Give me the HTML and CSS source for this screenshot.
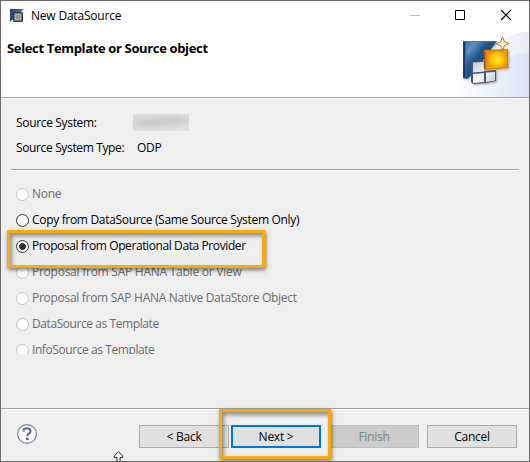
FILE: index.html
```html
<!DOCTYPE html>
<html lang="en">
<head>
<meta charset="utf-8">
<title>New DataSource</title>
<link rel="stylesheet" href="styles.css">
</head>
<body>
<div class="window">
  <header class="titlebar">
    <svg class="app-icon" width="14" height="14" viewBox="0 0 14 14">
      <defs><linearGradient id="ab" x2="1"><stop stop-color="#1c477d"/><stop offset="1" stop-color="#397cb5"/></linearGradient></defs>
      <path d="M0 0h14L0 13z" fill="url(#ab)"/>
      <path d="M3.5 3.5h9v9h-9z" fill="#777" stroke="#3f3f3f"/>
      <path d="M5.5 5.5h5v5h-5z" fill="#939393" stroke="#b5b5b5"/>
    </svg>
    <span class="title">New DataSource</span>
    <svg class="controls" width="101" height="12" viewBox="0 0 101 12" fill="none">
      <path d="M0 6.5h10" stroke="#bfbfbf"/>
      <path d="M45.5 1.5h9v9h-9z" stroke="#000"/>
      <path d="M91 1l10 10M101 1L91 11" stroke="#000" stroke-width="1.1"/>
    </svg>
  </header>
  <section class="banner">
    <h1>Select Template or Source object</h1>
    <svg class="banner-art" width="74" height="67" viewBox="455 30 74 67">
      <defs>
        <linearGradient id="sky"><stop stop-color="#fff"/><stop offset="1" stop-color="#d8e1f5"/></linearGradient>
        <linearGradient id="blue" x2="1" y2="1"><stop stop-color="#2a639c"/><stop offset=".2" stop-color="#5c93c3"/><stop offset=".4" stop-color="#245486"/><stop offset="1" stop-color="#163b70"/></linearGradient>
        <radialGradient id="gold"><stop stop-color="#ffed24"/><stop offset=".55" stop-color="#ffc80b"/><stop offset="1" stop-color="#ef9700"/></radialGradient>
        <linearGradient id="glass" x2="1" y2="1"><stop stop-color="#bccbdd"/><stop offset=".5" stop-color="#f2f6fb"/><stop offset="1" stop-color="#c3ceda"/></linearGradient>
        <filter id="soft" x="-20%" y="-20%" width="150%" height="150%"><feDropShadow dx="1" dy="1" stdDeviation=".8" flood-opacity=".35"/></filter>
      </defs>
      <path d="M455 97Q480 38 529 31V97z" fill="url(#sky)" opacity=".6"/>
      <path d="M455 97Q494 56 529 52V97z" fill="url(#sky)" opacity=".8"/>
      <g filter="url(#soft)">
        <path d="M463 41h34l-9 12-14 20-7 6-4-1z" fill="url(#blue)"/>
        <path d="M464.3 42v36" stroke="#12396c" stroke-width="2.2"/>
        <path d="M466 43v34M464 41.500h32" stroke="#477dac" stroke-width=".8"/>
        <path d="M471 62l13-1v10l12-1v11l-10 2-13 1-2-2v-10z" fill="#4b5969"/>
        <path d="M473 62.500l11-.500v9.500l-11 1zM473 74l11-1v9l-11 1zM486 72.500l9-.500v8.500l-9 1.500z" fill="url(#glass)"/>
        <path d="M484 50l24-1v19l-23 2z" fill="#dc7d00"/>
        <path d="M487 51.500l20-1v16.500l-20 2z" fill="url(#gold)"/>
        <path d="M484.500 51v18" stroke="#a75700" stroke-width="1.400"/>
      </g>
      <path d="M502.500 37l2 5 4.500 1.500-4.500 2-2 5-2-5-4.500-2 4.500-1.500z" fill="#fff9df" stroke="#b57c18"/>
    </svg>
  </section>
  <main class="content">
    <dl class="source">
      <dt class="sys">Source System:</dt><dd><span class="redacted"></span></dd>
      <dt class="type">Source System Type:</dt><dd class="value">ODP</dd>
    </dl>
    <div class="options">
      <div class="option off"><i class="radio"></i><span>None</span></div>
      <div class="option copy"><i class="radio"></i><span>Copy from DataSource (Same Source System Only)</span></div>
      <div class="option on"><i class="radio"></i><span>Proposal from Operational Data Provider</span></div>
      <div class="option off"><i class="radio"></i><span>Proposal from SAP HANA Table or View</span></div>
      <div class="option off native"><i class="radio"></i><span>Proposal from SAP HANA Native DataStore Object</span></div>
      <div class="option off template"><i class="radio"></i><span>DataSource as Template</span></div>
      <div class="option off template"><i class="radio"></i><span>InfoSource as Template</span></div>
    </div>
  </main>
  <footer class="footer">
    <svg class="help" width="22" height="22" viewBox="0 0 22 22" fill="none">
      <circle cx="11" cy="11" r="9.400" fill="#f7f9fc" stroke="#74869d" stroke-width="1.200"/>
      <path d="M7.700 8.600V6.400Q9 5.200 11.200 5.200Q14.500 5.200 14.500 8Q14.500 9.600 12.800 10.700Q11.300 11.600 11.300 13.200" stroke="#586b88" stroke-width="2.100"/>
      <path d="M10 14.700h2.600v2.300H10z" fill="#586b88"/>
    </svg>
    <div class="btn back">&lt; Back</div>
    <div class="btn next">Next &gt;</div>
    <div class="btn finish">Finish</div>
    <div class="btn cancel">Cancel</div>
  </footer>
  <div class="mark mark-option"></div>
  <div class="mark mark-next"></div>
  <svg class="cursor" width="11" height="12" viewBox="0 0 11 12"><path d="M5.500.700L9.700 5v1.500H7V12H4V6.500H1.300V5z" fill="#fff" stroke="#202030"/></svg>
</div>
</body>
</html>
```
FILE: styles.css
```css
* { box-sizing: border-box; }
body { margin: 0; background: #efefef; }
.window {
  position: relative;
  display: flex;
  flex-direction: column;
  width: 530px;
  height: 462px;
  overflow: hidden;
  border: 1px solid #6c6a6c;
  background: #efefef;
  color: #000;
  font: 12px/16px "Open Sans", "Noto Sans", sans-serif;
  letter-spacing: -0.25px;
}
.titlebar {
  display: flex;
  align-items: center;
  height: 29px;
  padding: 0 18px 0 9px;
  background: #fff;
}
.title { margin-left: 7px; letter-spacing: -0.2px; }
.controls { margin-left: auto; position: relative; top: -1px; }
.banner {
  display: flex;
  justify-content: space-between;
  height: 68px;
  padding-left: 6px;
  background: #fff;
  border-bottom: 1px solid #a0a0a0;
}
.banner h1 {
  margin: 10px 0 0;
  font-size: 13px;
  line-height: 17px;
  font-weight: 700;
  letter-spacing: -0.35px;
  white-space: nowrap;
}
.content { height: 310px; padding: 16px 10px 0; box-shadow: inset 0 1px #fff; }
.source {
  display: grid;
  grid-template-columns: 117px 1fr;
  grid-template-rows: 25px 25px;
  margin: 0;
  padding-left: 5px;
  height: 55px;
}
.source dt { padding-top: 1px; letter-spacing: -0.33px; }
.source .type { letter-spacing: -0.36px; }
.source dd { margin: 0; }
.source .value { padding: 1px 0 0 4px; }
.redacted {
  display: block;
  width: 56px;
  height: 17px;
  background: radial-gradient(ellipse at 72% 35%, #c9c9c9, transparent 45%), radial-gradient(ellipse at 32% 50%, #cbcbcb, #e0e0e0 75%);
}
.options {
  height: 185px;
  padding: 11px 0 0 5px;
  border-top: 1px solid #a0a0a0;
  box-shadow: inset 0 1px #fff;
  overflow: hidden;
}
.option { display: flex; align-items: center; height: 26px; white-space: nowrap; }
.radio {
  flex: none;
  width: 13px;
  height: 13px;
  margin-right: 3px;
  border: 1px solid #333;
  border-radius: 50%;
  background: #fff;
}
.copy { letter-spacing: -0.32px; }
.native { letter-spacing: -0.29px; }
.template { letter-spacing: -0.42px; }
.off { color: #6d6d6d; }
.off .radio { border-color: #c4c4c4; }
.on { letter-spacing: -0.4px; }
.on .radio { background: radial-gradient(circle, #333 3px, #fff 3.8px); }
.footer {
  display: flex;
  height: 53px;
  padding: 16px 12px 0 15px;
  border-top: 1px solid #a0a0a0;
  box-shadow: inset 0 1px #fff;
}
.btn {
  width: 90px;
  height: 23px;
  border: 1px solid #adadad;
  background: #e1e1e1;
  line-height: 21px;
  text-align: center;
}
.help { margin-top: -2px; }
.back { margin-left: auto; }
.next { margin-left: 2px; border: 2px solid #0078d7; line-height: 19px; }
.finish { margin-left: 8px; border-color: #bfbfbf; background: #ccc; color: #838383; }
.cancel { margin-left: 8px; }
.mark {
  position: absolute;
  border: 3px solid #fbab09;
  box-shadow: 1px 2px 4px rgba(0,0,0,.5), inset 2px 3px 4px rgba(0,0,0,.42);
}
.mark-option { left: 6px; top: 229px; width: 258px; height: 38px; }
.mark-next { left: 218px; top: 408px; width: 112px; height: 50px; }
.cursor { position: absolute; left: 112px; top: 450px; }
```
